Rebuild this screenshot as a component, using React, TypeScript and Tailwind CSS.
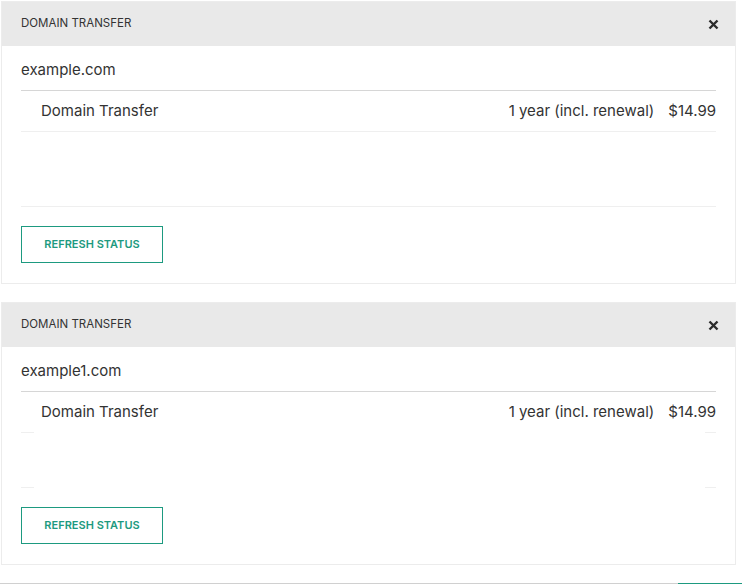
import React from 'react';

interface Transfer {
  domain: string;
  gap: string;
  faded: boolean;
}

const transfers: Transfer[] = [
  { domain: 'example.com', gap: 'h-[74px]', faded: false },
  { domain: 'example1.com', gap: 'h-[54px]', faded: true },
];

function CloseIcon() {
  return (
    <svg width="11" height="11" viewBox="0 0 11 11" className="text-[#2b2b2b]">
      <path d="M1.5 1.5 L9.5 9.5 M9.5 1.5 L1.5 9.5" stroke="currentColor" strokeWidth="2.4" strokeLinecap="butt" />
    </svg>
  );
}

function Divider({ faded }: { faded: boolean }) {
  if (faded) {
    return (
      <div className="flex h-px justify-between">
        <div className="w-[13px] bg-[#efefef]" />
        <div className="w-[11px] bg-[#efefef]" />
      </div>
    );
  }
  return <div className="h-px bg-[#efefef]" />;
}

function TransferCard({ item }: { item: Transfer }) {
  return (
    <div className="ml-[1px] w-[735px] border border-[#ececec] bg-white">
      {/* Header */}
      <div className="flex h-[44px] items-center justify-between bg-[#e9e9e9] pl-[19px] pr-[16px]">
        <span className="text-[11.5px] uppercase text-[#333]">Domain Transfer</span>
        <CloseIcon />
      </div>

      <div className="px-[19px]">
        <div className="h-[45px] border-b border-[#d6d6d6] pt-[15px] text-[15px] leading-[18px] text-[#333]">
          {item.domain}
        </div>

        <div className="flex h-[40px] items-center justify-between pl-5 text-[15px] text-[#333]">
          <span>Domain Transfer</span>
          <div className="flex gap-[14px]">
            <span>1 year (incl. renewal)</span>
            <span>$14.99</span>
          </div>
        </div>

        <Divider faded={item.faded} />
        <div className={item.gap} />
        <Divider faded={item.faded} />

        <div className="pb-5 pt-[19px]">
          <button className="h-[37px] w-[142px] border border-[#1d9a80] text-[11px] font-semibold uppercase text-[#1d9a80]">
            Refresh Status
          </button>
        </div>
      </div>
    </div>
  );
}

export default function App() {
  return (
    <div className="relative h-[584px] w-[742px] overflow-hidden bg-white font-['Inter',sans-serif]">
      <div className="flex flex-col gap-[18px] pt-[1px]">
        {transfers.map((t) => (
          <TransferCard key={t.domain} item={t} />
        ))}
      </div>
      <div className="absolute bottom-0 left-0 flex h-px w-full">
        <div className="w-[678px] bg-[#d0d0d0]" />
        <div className="flex-1 bg-[#1d9a80]" />
      </div>
    </div>
  );
}
